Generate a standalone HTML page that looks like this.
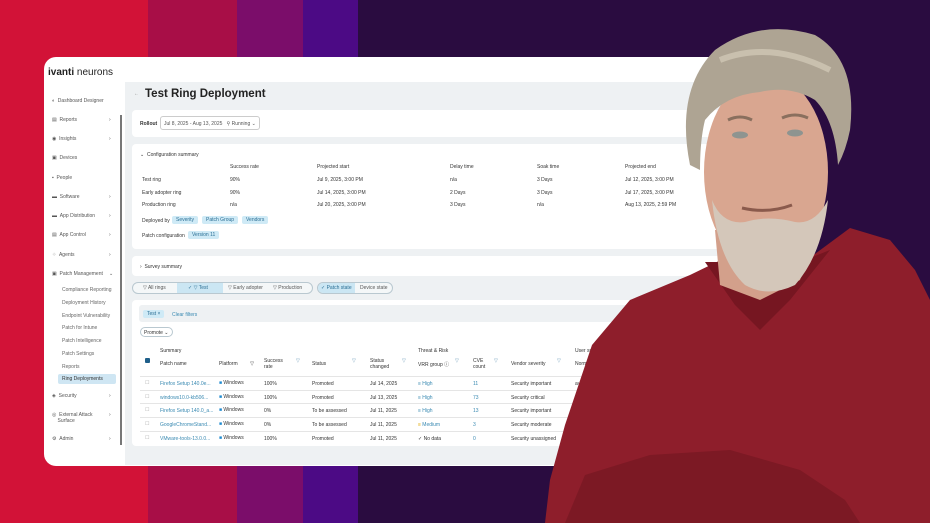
<!DOCTYPE html>
<html><head><meta charset="utf-8"><style>
*{margin:0;padding:0;box-sizing:border-box}
body{width:930px;height:523px;overflow:hidden;position:relative;font-family:"Liberation Sans",sans-serif;background:#2a0c40}
.s{position:absolute;top:0;height:523px}
.a{position:absolute;white-space:nowrap;font-size:5px;color:#333}
.card{position:absolute;background:#fff;border-radius:4px}
.tag{position:absolute;background:#cfeaf6;color:#2b6f95;font-size:5px;padding:1px 4px;border-radius:2px}
.lnk{color:#3a8ab2}
</style></head><body>
<div class="s" style="left:0;width:148px;background:#d21237"></div>
<div class="s" style="left:148px;width:89px;background:#a80e47"></div>
<div class="s" style="left:237px;width:66px;background:#7b0d6a"></div>
<div class="s" style="left:303px;width:55px;background:#4c0a85"></div>
<div class="s" style="left:358px;width:572px;background:#2a0c40"></div>

<div style="position:absolute;left:44px;top:57px;width:690px;height:409px;background:#fff;border-radius:12px"></div>
<div style="position:absolute;left:125px;top:82px;width:609px;height:383px;background:#eef1f3"></div>
<div class="a" style="left:48px;top:67px;font-size:10px;color:#222"><b>ivanti</b> neurons</div>
<div style="position:absolute;left:120px;top:115px;width:2px;height:330px;background:#777"></div>

<div class="a" style="left:52px;top:98px;color:#555">◐ &nbsp;Dashboard Designer</div>
<div class="a" style="left:52px;top:117px;color:#555">▤ &nbsp;Reports<span style="position:absolute;left:57px">›</span></div>
<div class="a" style="left:52px;top:136px;color:#555">◉ &nbsp;Insights<span style="position:absolute;left:57px">›</span></div>
<div class="a" style="left:52px;top:155px;color:#555">▣ &nbsp;Devices</div>
<div class="a" style="left:52px;top:175px;color:#555">▪ &nbsp;People</div>
<div class="a" style="left:52px;top:194px;color:#555">▬ &nbsp;Software<span style="position:absolute;left:57px">›</span></div>
<div class="a" style="left:52px;top:213px;color:#555">▬ &nbsp;App Distribution<span style="position:absolute;left:57px">›</span></div>
<div class="a" style="left:52px;top:232px;color:#555">▤ &nbsp;App Control<span style="position:absolute;left:57px">›</span></div>
<div class="a" style="left:52px;top:252px;color:#555">⁘ &nbsp;Agents<span style="position:absolute;left:57px">›</span></div>
<div class="a" style="left:52px;top:271px;color:#555">▣ &nbsp;Patch Management<span style="position:absolute;left:57px">⌄</span></div>
<div class="a" style="left:62px;top:287px;color:#666">Compliance Reporting</div>
<div class="a" style="left:62px;top:300px;color:#666">Deployment History</div>
<div class="a" style="left:62px;top:313px;color:#666">Endpoint Vulnerability</div>
<div class="a" style="left:62px;top:325px;color:#666">Patch for Intune</div>
<div class="a" style="left:62px;top:338px;color:#666">Patch Intelligence</div>
<div class="a" style="left:62px;top:351px;color:#666">Patch Settings</div>
<div class="a" style="left:62px;top:364px;color:#666">Reports</div>
<div style="position:absolute;left:58px;top:374px;width:58px;height:10px;background:#cfe6f3;border-radius:2px"></div>
<div class="a" style="left:62px;top:376px;color:#333">Ring Deployments</div>
<div class="a" style="left:52px;top:393px;color:#555">◈ &nbsp;Security<span style="position:absolute;left:57px">›</span></div>
<div class="a" style="left:52px;top:412px;color:#555">◎ &nbsp;External Attack<br>&nbsp;&nbsp;&nbsp;&nbsp;Surface<span style="position:absolute;left:57px;top:0">›</span></div>
<div class="a" style="left:52px;top:436px;color:#555">⚙ &nbsp;Admin<span style="position:absolute;left:57px">›</span></div>

<div class="a" style="left:134px;top:91px;color:#888">←</div>
<div class="a" style="left:145px;top:88px;font-size:11.5px;font-weight:bold;color:#222">Test Ring Deployment</div>

<div class="card" style="left:132px;top:110px;width:600px;height:27px"></div>
<div class="a" style="left:140px;top:121px"><b>Rollout</b></div>
<div style="position:absolute;left:160px;top:116px;width:100px;height:14px;border:1px solid #ccc;border-radius:3px"></div>
<div class="a" style="left:164px;top:121px;color:#555">Jul 8, 2025 - Aug 13, 2025 &nbsp; ⚲ Running ⌄</div>

<div class="card" style="left:132px;top:144px;width:600px;height:105px"></div>
<div class="a" style="left:140px;top:152px">⌄ &nbsp;Configuration summary</div>
<div class="a" style="left:230px;top:164px">Success rate</div><div class="a" style="left:317px;top:164px">Projected start</div><div class="a" style="left:450px;top:164px">Delay time</div><div class="a" style="left:537px;top:164px">Soak time</div><div class="a" style="left:625px;top:164px">Projected end</div>
<div class="a" style="left:142px;top:177px">Test ring</div><div class="a" style="left:230px;top:177px">90%</div><div class="a" style="left:317px;top:177px">Jul 9, 2025, 3:00 PM</div><div class="a" style="left:450px;top:177px">n/a</div><div class="a" style="left:537px;top:177px">3 Days</div><div class="a" style="left:625px;top:177px">Jul 12, 2025, 3:00 PM</div>
<div class="a" style="left:142px;top:190px">Early adopter ring</div><div class="a" style="left:230px;top:190px">90%</div><div class="a" style="left:317px;top:190px">Jul 14, 2025, 3:00 PM</div><div class="a" style="left:450px;top:190px">2 Days</div><div class="a" style="left:537px;top:190px">3 Days</div><div class="a" style="left:625px;top:190px">Jul 17, 2025, 3:00 PM</div>
<div class="a" style="left:142px;top:202px">Production ring</div><div class="a" style="left:230px;top:202px">n/a</div><div class="a" style="left:317px;top:202px">Jul 20, 2025, 3:00 PM</div><div class="a" style="left:450px;top:202px">3 Days</div><div class="a" style="left:537px;top:202px">n/a</div><div class="a" style="left:625px;top:202px">Aug 13, 2025, 2:59 PM</div>
<div class="a" style="left:142px;top:218px">Deployed by</div>
<span class="tag" style="left:172px;top:216px">Severity</span><span class="tag" style="left:202px;top:216px">Patch Group</span><span class="tag" style="left:242px;top:216px">Vendors</span>
<div class="a" style="left:142px;top:233px">Patch configuration</div>
<span class="tag" style="left:188px;top:231px">Version 11</span>

<div class="card" style="left:132px;top:256px;width:600px;height:20px"></div>
<div class="a" style="left:140px;top:264px">› &nbsp;Survey summary</div>

<div style="position:absolute;left:132px;top:282px;width:181px;height:12px;border:1px solid #b9c8d0;border-radius:6px;background:#f4f7f8"></div>
<div style="position:absolute;left:177px;top:283px;width:46px;height:10px;background:#cbe6f3"></div>
<div class="a" style="left:143px;top:285px;color:#555">▽ All rings</div><div class="a" style="left:188px;top:285px;color:#2b6f95">✓ ▽ Test</div><div class="a" style="left:228px;top:285px;color:#555">▽ Early adopter</div><div class="a" style="left:273px;top:285px;color:#555">▽ Production</div>
<div style="position:absolute;left:317px;top:282px;width:76px;height:12px;border:1px solid #b9c8d0;border-radius:6px;background:#f4f7f8"></div>
<div style="position:absolute;left:318px;top:283px;width:37px;height:10px;background:#cbe6f3;border-radius:5px 0 0 5px"></div>
<div class="a" style="left:321px;top:285px;color:#2b6f95">✓ Patch state</div><div class="a" style="left:360px;top:285px;color:#555">Device state</div>

<div class="card" style="left:132px;top:300px;width:600px;height:146px"></div>
<div style="position:absolute;left:139px;top:305px;width:590px;height:17px;background:#eef1f3;border-radius:3px"></div>
<span class="tag" style="left:143px;top:310px">Test ×</span><div class="a lnk" style="left:172px;top:312px">Clear filters</div>
<div style="position:absolute;left:140px;top:327px;width:33px;height:10px;border:1px solid #b9c8d0;border-radius:5px"></div>
<div class="a" style="left:144px;top:330px">Promote ⌄</div>
<div class="a" style="left:160px;top:348px">Summary</div><div class="a" style="left:418px;top:348px">Threat &amp; Risk</div><div class="a" style="left:575px;top:348px">User survey</div>
<div style="position:absolute;left:145px;top:358px;width:5px;height:5px;background:#1f5f8a;border-radius:1px"></div>
<div class="a" style="left:160px;top:361px">Patch name</div><div class="a" style="left:219px;top:361px">Platform &nbsp;&nbsp;&nbsp;&nbsp;&nbsp;&nbsp;&nbsp;&nbsp;▽</div><div class="a" style="left:264px;top:358px">Success<br>rate</div><div class="a" style="left:312px;top:361px">Status</div><div class="a" style="left:370px;top:358px">Status<br>changed</div><div class="a" style="left:418px;top:361px">VRR group ⓘ</div><div class="a" style="left:473px;top:358px">CVE<br>count</div><div class="a" style="left:511px;top:361px">Vendor severity</div><div class="a" style="left:575px;top:361px">Normalized</div>
<div class="a" style="left:296px;top:358px;color:#6a9ab8">▽</div><div class="a" style="left:352px;top:358px;color:#6a9ab8">▽</div><div class="a" style="left:402px;top:358px;color:#6a9ab8">▽</div><div class="a" style="left:455px;top:358px;color:#6a9ab8">▽</div><div class="a" style="left:494px;top:358px;color:#6a9ab8">▽</div><div class="a" style="left:557px;top:358px;color:#6a9ab8">▽</div>

<div style="position:absolute;left:140px;top:376px;width:590px;border-top:1px solid #e5e5e5"></div>
<div style="position:absolute;left:140px;top:390px;width:590px;border-top:1px solid #e5e5e5"></div>
<div style="position:absolute;left:140px;top:403px;width:590px;border-top:1px solid #e5e5e5"></div>
<div style="position:absolute;left:140px;top:417px;width:590px;border-top:1px solid #e5e5e5"></div>
<div style="position:absolute;left:140px;top:431px;width:590px;border-top:1px solid #e5e5e5"></div>

<div class="a" style="left:145px;top:380px;color:#aaa">☐</div><div class="a lnk" style="left:160px;top:381px">Firefox Setup 140.0e...</div><div class="a" style="left:219px;top:380px"><span style="color:#1e8ad0">■</span> Windows</div><div class="a" style="left:264px;top:381px">100%</div><div class="a" style="left:312px;top:381px">Promoted</div><div class="a" style="left:370px;top:381px">Jul 14, 2025</div><div class="a lnk" style="left:418px;top:381px">≡ High</div><div class="a lnk" style="left:473px;top:381px">11</div><div class="a" style="left:511px;top:381px">Security important</div><div class="a" style="left:575px;top:381px">average</div>
<div class="a" style="left:145px;top:394px;color:#aaa">☐</div><div class="a lnk" style="left:160px;top:395px">windows10.0-kb506...</div><div class="a" style="left:219px;top:394px"><span style="color:#1e8ad0">■</span> Windows</div><div class="a" style="left:264px;top:395px">100%</div><div class="a" style="left:312px;top:395px">Promoted</div><div class="a" style="left:370px;top:395px">Jul 13, 2025</div><div class="a lnk" style="left:418px;top:395px">≡ High</div><div class="a lnk" style="left:473px;top:395px">73</div><div class="a" style="left:511px;top:395px">Security critical</div>
<div class="a" style="left:145px;top:407px;color:#aaa">☐</div><div class="a lnk" style="left:160px;top:408px">Firefox Setup 140.0_a...</div><div class="a" style="left:219px;top:407px"><span style="color:#1e8ad0">■</span> Windows</div><div class="a" style="left:264px;top:408px">0%</div><div class="a" style="left:312px;top:408px">To be assessed</div><div class="a" style="left:370px;top:408px">Jul 11, 2025</div><div class="a lnk" style="left:418px;top:408px">≡ High</div><div class="a lnk" style="left:473px;top:408px">13</div><div class="a" style="left:511px;top:408px">Security important</div>
<div class="a" style="left:145px;top:421px;color:#aaa">☐</div><div class="a lnk" style="left:160px;top:422px">GoogleChromeStand...</div><div class="a" style="left:219px;top:421px"><span style="color:#1e8ad0">■</span> Windows</div><div class="a" style="left:264px;top:422px">0%</div><div class="a" style="left:312px;top:422px">To be assessed</div><div class="a" style="left:370px;top:422px">Jul 11, 2025</div><div class="a lnk" style="left:418px;top:422px"><span style="color:#e0a800">≡</span> Medium</div><div class="a lnk" style="left:473px;top:422px">3</div><div class="a" style="left:511px;top:422px">Security moderate</div>
<div class="a" style="left:145px;top:435px;color:#aaa">☐</div><div class="a lnk" style="left:160px;top:436px">VMware-tools-13.0.0...</div><div class="a" style="left:219px;top:435px"><span style="color:#1e8ad0">■</span> Windows</div><div class="a" style="left:264px;top:436px">100%</div><div class="a" style="left:312px;top:436px">Promoted</div><div class="a" style="left:370px;top:436px">Jul 11, 2025</div><div class="a" style="left:418px;top:436px">✓ No data</div><div class="a lnk" style="left:473px;top:436px">0</div><div class="a" style="left:511px;top:436px">Security unassigned</div>

<svg style="position:absolute;left:0;top:0" width="930" height="523" viewBox="0 0 930 523">
<path d="M545 523 L550 480 L565 425 L592 345 L630 300 L690 275 L725 258 L800 265 L850 228 L890 240 L915 270 L930 300 L930 523 Z" fill="#8e1e2b"/>
<path d="M565 523 L585 475 L650 455 L730 450 L800 470 L845 500 L860 523 Z" fill="#7c1924"/>
<path d="M705 262 L735 305 L760 330 L790 300 L830 250 L800 262 Z" fill="#761621"/>
<path d="M715 230 L720 285 L760 300 L800 280 L815 235 Z" fill="#d3a08b"/>
<ellipse cx="766" cy="172" rx="62" ry="98" fill="#d9a690"/>
<path d="M712 200 Q718 260 745 285 Q768 298 795 285 Q822 255 828 200 Q815 225 795 222 Q768 215 745 222 Q722 225 712 200 Z" fill="#d4c7ba"/>
<path d="M742 208 Q768 214 792 205" stroke="#8a5a4c" stroke-width="3" fill="none"/>
<path d="M690 165 Q675 90 715 50 Q760 18 815 35 Q858 60 850 130 Q846 150 838 165 Q835 120 815 100 Q790 85 760 92 Q725 95 705 120 Q700 140 700 170 Z" fill="#aea493"/>
<path d="M720 60 Q770 40 830 70" stroke="#c9c0ae" stroke-width="6" fill="none"/>
<path d="M728 120 Q740 114 752 120" stroke="#8a6f5e" stroke-width="3" fill="none"/>
<path d="M782 118 Q795 112 808 118" stroke="#8a6f5e" stroke-width="3" fill="none"/>
<ellipse cx="740" cy="135" rx="8" ry="3.5" fill="#8e9490"/>
<ellipse cx="795" cy="133" rx="8" ry="3.5" fill="#8e9490"/>
</svg>
</body></html>
